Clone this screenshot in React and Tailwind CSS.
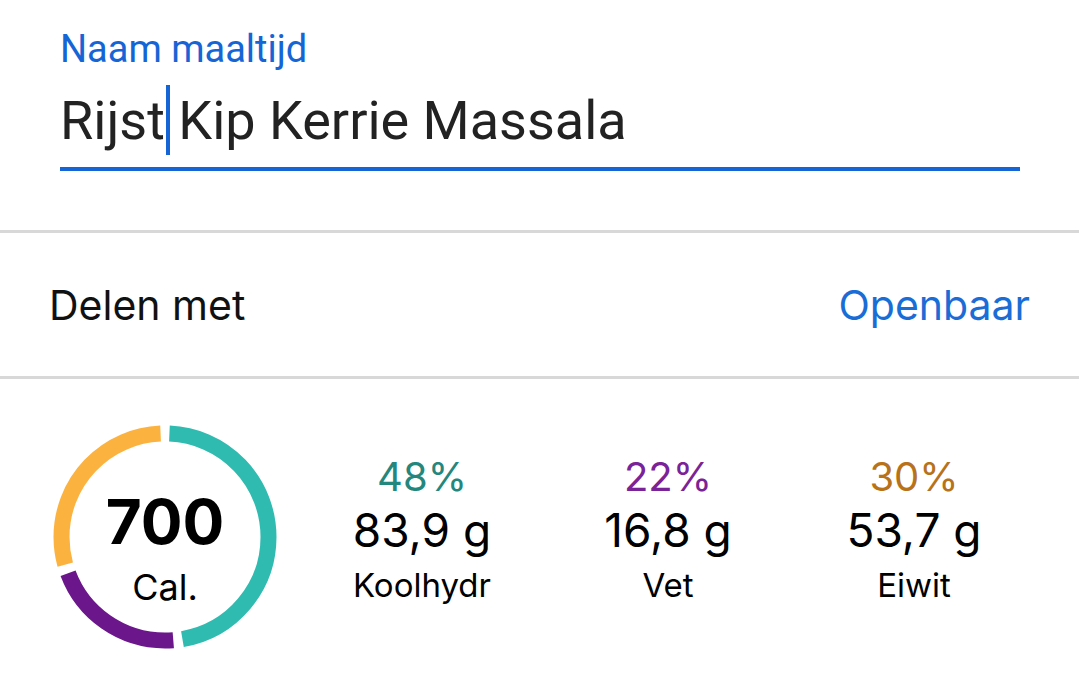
import React from "react";

const macros = [
  { pct: "48%", amount: "83,9 g", label: "Koolhydr", color: "text-[#24877d]" },
  { pct: "22%", amount: "16,8 g", label: "Vet", color: "text-[#7a2398]" },
  { pct: "30%", amount: "53,7 g", label: "Eiwit", color: "text-[#b7721a]" },
];

// segments in percent of the ring, clockwise from the top
const segments = [
  { start: 0, size: 48, stroke: "#30bbb1" },
  { start: 48, size: 22, stroke: "#6b168a" },
  { start: 70, size: 30, stroke: "#fcb23f" },
];

function CalorieRing() {
  const gap = 1.4;
  return (
    <div className="relative w-[224px] h-[224px] shrink-0">
      <svg width="224" height="224" viewBox="0 0 224 224" className="absolute inset-0">
        {segments.map((s) => (
          <circle
            key={s.start}
            cx="112"
            cy="112"
            r="103.5"
            fill="none"
            stroke={s.stroke}
            strokeWidth="16"
            pathLength="100"
            strokeDasharray={`${s.size - gap} ${100 - s.size + gap}`}
            strokeDashoffset={-(s.start + gap / 2)}
            transform="rotate(-90 112 112)"
          />
        ))}
      </svg>
      <div className="flex flex-col items-center pt-[66px]">
        <span className="text-[62px] leading-[62px] font-bold text-black">700</span>
        <span className="mt-[14px] text-[36px] leading-[40px] text-black">Cal.</span>
      </div>
    </div>
  );
}

export default function App() {
  return (
    <div className="w-[1079px] h-[683px] bg-white overflow-hidden font-['Inter',sans-serif]">
      {/* Name field */}
      <div className="pl-[60px] pr-[59px] pt-[27px] font-['Roboto',sans-serif]">
        <div className="text-[38px] leading-[44px] text-[#1565d6]">Naam maaltijd</div>
        <div className="mt-[15px] text-[54px] leading-[70px] text-[#222222] whitespace-nowrap">
          Rijst
          <span className="relative">
            <span className="absolute left-[1px] top-[-4px] w-[4px] h-[70px] bg-[#1565d6]" />
          </span>{" "}
          Kip Kerrie Massala
        </div>
        <div className="mt-[11px] h-[4px] bg-[#1565d6]" />
      </div>

      <div className="mt-[59px] h-[3px] bg-[#d8d8d8]" />

      {/* Share row */}
      <div className="h-[143px] flex items-center justify-between pl-[49px] pr-[49px]">
        <span className="text-[41px] leading-[50px] text-[#111111]">Delen met</span>
        <span className="text-[41px] leading-[50px] text-[#1a6dd6]">Openbaar</span>
      </div>

      <div className="h-[3px] bg-[#d8d8d8]" />

      {/* Nutrition */}
      <div className="flex pl-[53px] pt-[46px]">
        <CalorieRing />
        <div className="ml-[22px] grid grid-cols-3 w-[738px] pt-[28px]">
          {macros.map((m) => (
            <div key={m.label} className="flex flex-col items-center">
              <span className={`text-[40px] leading-[48px] ${m.color}`}>{m.pct}</span>
              <span className="mt-[3px] text-[46px] leading-[52px] text-black">{m.amount}</span>
              <span className="mt-[9px] text-[33px] leading-[40px] text-black">{m.label}</span>
            </div>
          ))}
        </div>
      </div>
    </div>
  );
}
